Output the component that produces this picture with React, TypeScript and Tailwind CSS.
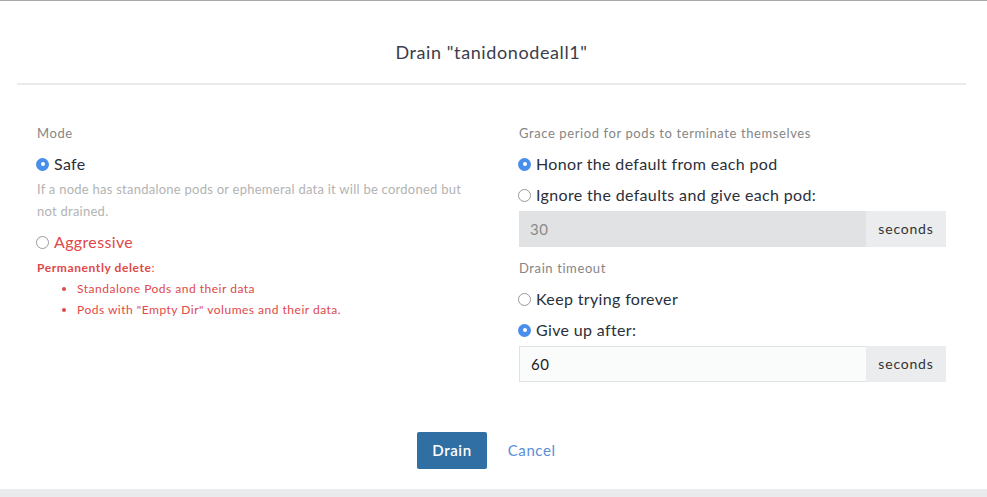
import React from "react"

function Radio({ checked, label, className = "" }: { checked?: boolean; label: string; className?: string }) {
  return (
    <label className={`flex items-center gap-[5px] text-[16px] leading-[22px] tracking-[0.35px] ${className}`}>
      {checked ? (
        <span className="flex h-[13px] w-[13px] items-center justify-center rounded-full bg-[#4a8eeb]">
          <span className="h-[4px] w-[4px] rounded-full bg-white" />
        </span>
      ) : (
        <span className="h-[13px] w-[13px] rounded-full border border-[#9a9a9a] bg-white" />
      )}
      <span>{label}</span>
    </label>
  )
}

function SecondsInput({ value, disabled }: { value: string; disabled?: boolean }) {
  return (
    <div className="flex h-[36px]">
      <div
        className={`flex flex-1 items-center px-[11px] text-[15px] tracking-[0.5px] ${
          disabled ? "bg-[#e1e2e3] text-[#8a8a8a]" : "border border-r-0 border-[#e0e2e3] bg-[#fafbfb] text-[#222]"
        }`}
      >
        {value}
      </div>
      <div className="flex w-[80px] items-center justify-center bg-[#eaeced] pb-[2px] text-[14px] tracking-[0.8px] text-[#333]">
        seconds
      </div>
    </div>
  )
}

export default function App() {
  return (
    <div className="min-h-[497px] bg-[#e9ebec] font-['Lato',sans-serif] text-[#2a2f3a]">
      <div className="border-t border-[#aaaaaa] bg-white pb-[20px]">
        {/* Header */}
        <div className="ml-[17px] mr-[21px] border-b-2 border-[#e9ebec] pb-[19px] pt-[39px] text-center text-[18px] leading-[24px] tracking-[0.6px] text-[#3b3d4b]">
          Drain "tanidonodeall1"
        </div>

        {/* Body */}
        <div className="grid grid-cols-2 gap-[55px] pl-[37px] pr-[41px] pt-[38px]">
          <div>
            <div className="text-[13px] leading-[20px] tracking-[0.6px] text-[#858585]">Mode</div>
            <Radio checked label="Safe" className="mt-[10px] -ml-[1px]" />
            <p className="mt-[3px] text-[13px] leading-[22px] tracking-[0.25px] text-[#b3b3b3]">
              If a node has standalone pods or ephemeral data it will be cordoned but not drained.
            </p>
            <Radio label="Aggressive" className="mt-[9px] -ml-[1px] text-[#e04848]" />
            <div className="mt-[5px] text-[12px] leading-[20px] tracking-[0.6px] text-[#e04848]">
              <b>Permanently delete</b>:
            </div>
            <ul className="pl-[40px] text-[12px] leading-[21px] tracking-[0.5px] text-[#e04848]">
              <li className="list-disc">Standalone Pods and their data</li>
              <li className="list-disc">Pods with "Empty Dir" volumes and their data.</li>
            </ul>
          </div>

          <div>
            <div className="text-[13px] leading-[20px] tracking-[0.6px] text-[#858585]">
              Grace period for pods to terminate themselves
            </div>
            <Radio checked label="Honor the default from each pod" className="mt-[10px] -ml-[1px]" />
            <Radio label="Ignore the defaults and give each pod:" className="mt-[9px] -ml-[1px]" />
            <div className="mt-[5px]">
              <SecondsInput value="30" disabled />
            </div>
            <div className="mt-[11px] text-[13px] leading-[20px] tracking-[0.6px] text-[#858585]">Drain timeout</div>
            <Radio label="Keep trying forever" className="mt-[10px] -ml-[1px]" />
            <Radio checked label="Give up after:" className="mt-[9px] -ml-[1px]" />
            <div className="mt-[5px]">
              <SecondsInput value="60" />
            </div>
          </div>
        </div>

        {/* Footer */}
        <div className="mt-[50px] flex justify-center gap-[7px]">
          <button className="h-[37px] rounded-[2px] bg-[#2f6fa3] px-[15px] text-[15px] font-semibold tracking-[0.6px] text-white">
            Drain
          </button>
          <button className="h-[37px] px-[14px] text-[15px] tracking-[0.6px] text-[#5b8ed6]">Cancel</button>
        </div>
      </div>
    </div>
  )
}
